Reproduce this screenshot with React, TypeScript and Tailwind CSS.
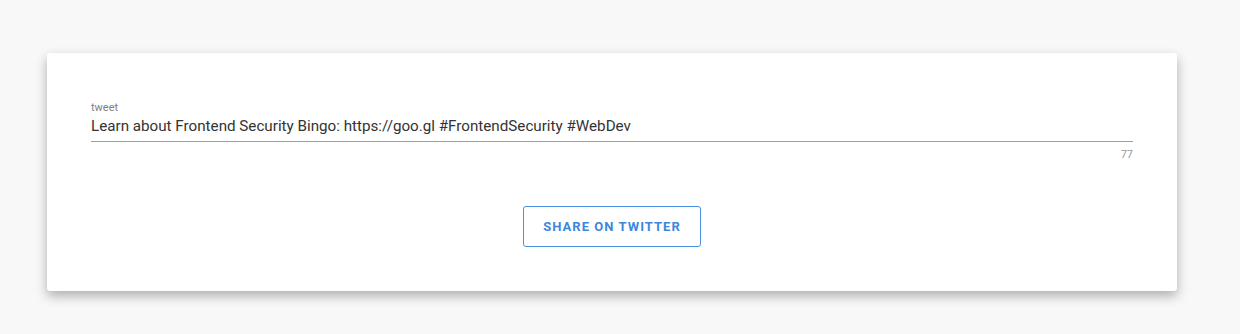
export default function App() {
  return (
    <div className="min-h-[334px] bg-[#f8f8f8] pt-[53px] px-[47px] pb-[44px] font-['Roboto',sans-serif]">
      <div className="w-[1130px] rounded-[3px] bg-white px-[44px] pt-[48px] pb-[44px] shadow-[0_5px_12px_rgba(0,0,0,0.3)]">
        <label className="block text-[11px] leading-[13px] text-[#808080]">tweet</label>
        <div className="border-b border-[#a0a0a0] pb-[3px]">
          <input
            className="w-full bg-transparent text-[15.2px] leading-[18px] text-[#333333] outline-none"
            defaultValue="Learn about Frontend Security Bingo: https://goo.gl #FrontendSecurity #WebDev"
          />
        </div>
        <div className="pt-[6px] text-right text-[11px] leading-[13px] text-[#999999]">77</div>
        <div className="flex justify-center pt-[45px]">
          <button className="h-[41px] w-[178px] rounded-[3px] border border-[#4a90e2] text-[13px] font-bold tracking-[1.05px] text-[#3c87dd]">
            SHARE ON TWITTER
          </button>
        </div>
      </div>
    </div>
  );
}
